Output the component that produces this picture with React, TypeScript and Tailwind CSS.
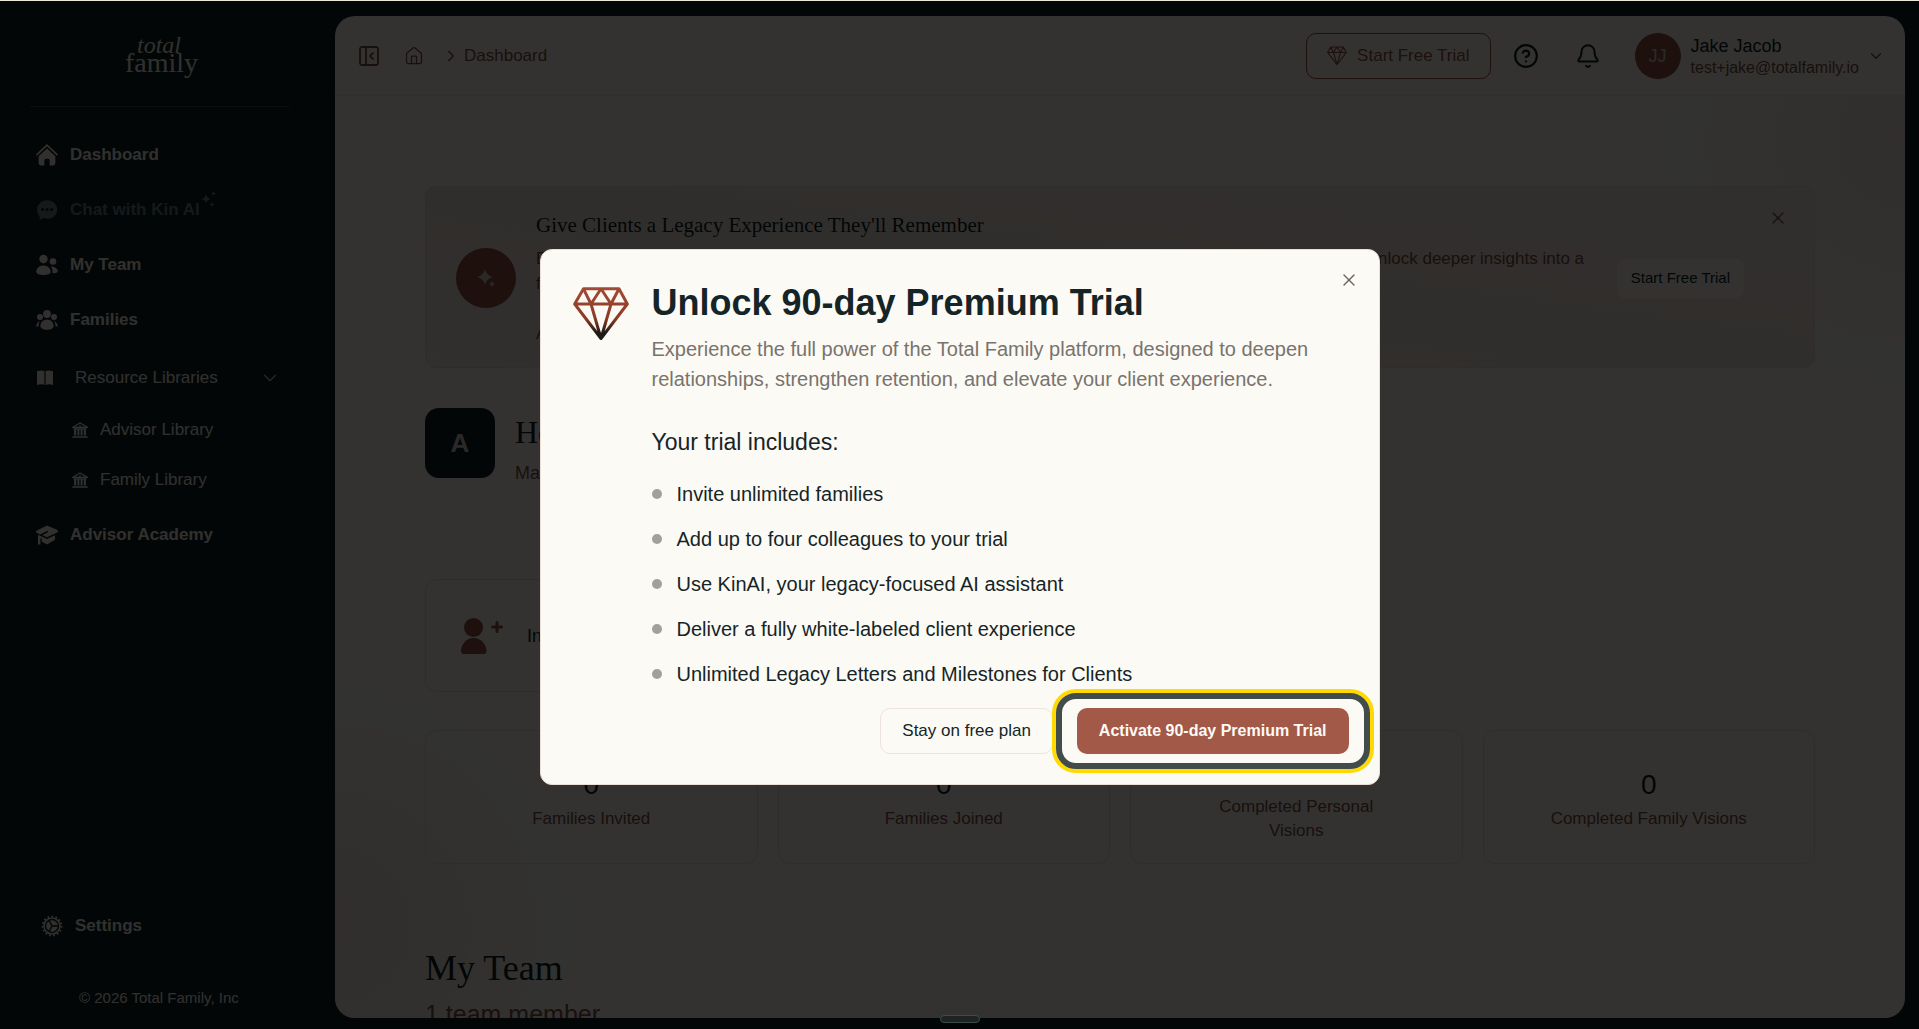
import React from 'react';
import { Bell, ChevronDown, ChevronRight, HelpCircle, House, PanelLeftClose, X } from 'lucide-react';

interface IconProps {
  className?: string;
}

const HomeIcon: React.FC<IconProps> = ({ className }) => (
  <svg viewBox="0 0 22 22" className={className} fill="currentColor">
    <path d="M1 10.6 11 1.2l10 9.4" fill="none" stroke="currentColor" strokeWidth="1.7" strokeLinecap="round" />
    <path d="M11 4.4 2.6 12.2V19a2.4 2.4 0 0 0 2.4 2.4h3.3v-5a1.6 1.6 0 0 1 1.6-1.6h2.2a1.6 1.6 0 0 1 1.6 1.6v5H17a2.4 2.4 0 0 0 2.4-2.4v-6.8z" />
  </svg>
);

const ChatIcon: React.FC<IconProps> = ({ className }) => (
  <svg viewBox="0 0 22 22" className={className} fill="currentColor">
    <path
      fillRule="evenodd"
      d="M11.2 1.2c5.6 0 10 4 10 9.2s-4.4 9.4-10 9.4c-1.4 0-2.6-.2-3.8-.7-1.2 1-2.8 1.6-4.6 1.6.8-1 1.1-2.2.9-3.3C2 15.7 1.2 13.2 1.2 10.4c0-5.2 4.4-9.2 10-9.2zM6.7 9a1.6 1.6 0 1 0 0 3.2 1.6 1.6 0 0 0 0-3.2zm4.5 0a1.6 1.6 0 1 0 0 3.2 1.6 1.6 0 0 0 0-3.2zm4.5 0a1.6 1.6 0 1 0 0 3.2 1.6 1.6 0 0 0 0-3.2z"
    />
  </svg>
);

const SparklesIcon: React.FC<IconProps> = ({ className }) => (
  <svg viewBox="0 0 16 16" className={className} fill="currentColor">
    <path d="M6 3q.6 4.4 5 5-4.4.6-5 5-.6-4.4-5-5 4.4-.6 5-5z" />
    <path d="M13.500 0q.2 2.200 2.500 2.500-2.300.3-2.500 2.500-.3-2.200-2.500-2.500 2.200-.3 2.500-2.500zM12 11q.3 2.200 2.500 2.500-2.200.3-2.500 2.500-.3-2.200-2.500-2.500 2.200-.3 2.500-2.500z" />
  </svg>
);

const TeamIcon: React.FC<IconProps> = ({ className }) => (
  <svg viewBox="0 0 22 22" className={className} fill="currentColor">
    <circle cx="7.5" cy="5" r="4.2" />
    <circle cx="17" cy="7.5" r="3.3" />
    <path d="M7.5 11.5c4.2 0 7.2 3 7.2 6.3 0 2.2-3.2 3.2-7.2 3.2s-7.2-1-7.2-3.200c0-3.300 3-6.300 7.200-6.300z" />
    <path d="M15 12.500c4 0 6.800 2.400 6.800 4.800 0 1.400-2.400 2-5.300 2 .3-2.600-.2-4.900-1.500-6.800z" />
  </svg>
);

const FamiliesIcon: React.FC<IconProps> = ({ className }) => (
  <svg viewBox="0 0 22 22" className={className} fill="currentColor">
    <circle cx="11" cy="5" r="3.9" />
    <circle cx="4" cy="8" r="3" />
    <circle cx="18" cy="8" r="3" />
    <path d="M11 10.500c4 0 6.600 3.200 6.600 6.600 0 2.400-2.600 3.700-6.600 3.700s-6.600-1.300-6.600-3.700c0-3.400 2.600-6.600 6.600-6.600z" />
    <path d="M3.900 12C1.700 13 .2 15 .2 17.500h2.300c0-2.200.4-4 1.400-5.500zM18.100 12c2.200 1 3.700 3 3.700 5.500h-2.300c0-2.200-.4-4-1.400-5.500z" />
  </svg>
);

const BookIcon: React.FC<IconProps> = ({ className }) => (
  <svg viewBox="0 0 16 16" className={className} fill="currentColor">
    <path d="M0 1.200C2.400.2 5.200.2 7.400 1v14c-2.200-1.100-5-1.100-7.400.1zM16 1.200C13.600.2 10.800.2 8.600 1v14c2.200-1.100 5-1.100 7.400.1z" />
  </svg>
);

const LibraryIcon: React.FC<IconProps> = ({ className }) => (
  <svg viewBox="0 0 16 16" className={className}>
    <path d="M.6 5.400 8 1l7.400 4.400z" fill="none" stroke="currentColor" strokeWidth="1.2" />
    <path d="M7 3.400h2v1.400H7zM1.500 6.200h13V7.500h-13zM2 7.500h2.200v6H2zM5.400 7.500h2v6h-2zM8.600 7.500h2v6h-2zM11.800 7.500H14v6h-2.200zM.3 14.200h15.400v1.500H.3z" fill="currentColor" />
  </svg>
);

const AcademyIcon: React.FC<IconProps> = ({ className }) => (
  <svg viewBox="0 0 22 22" className={className} fill="currentColor">
    <path d="M11 1.600 21.500 6 22 8l-11 5.200-4.600-2L12.200 8l-.7-1.200-7.400 3.700L.2 8.600 0 6.900z" />
    <path d="M2 10.800 11 15l8-3.700v4.500L11 20.400l-5.200-2.600v-3.200l-1.400-.6v6.400H2z" />
  </svg>
);

const SettingsIcon: React.FC<IconProps> = ({ className }) => (
  <svg viewBox="0 0 22 22" className={className} fill="none" stroke="currentColor">
    <circle cx="11" cy="11" r="8" strokeWidth="1.6" />
    <circle cx="11" cy="11" r="9.5" strokeWidth="1.9" strokeDasharray="1.7 2.3" />
    <circle cx="11" cy="11" r="5.8" fill="currentColor" stroke="none" />
    <path d="M11 11 8 5.400M11 11l-3 5.600M11 11h6.500" className="stroke-[#0b1f22]" strokeWidth="1.5" />
  </svg>
);

const GemIcon: React.FC<IconProps & { tipped?: boolean; weight: number }> = ({ className, tipped, weight }) => (
  <svg viewBox="0 0 56 54" className={className} fill="none" strokeWidth={weight} strokeLinejoin="round">
    <defs>
      <linearGradient id="gem-tip" x1="0" y1="0" x2="0" y2="54" gradientUnits="userSpaceOnUse">
        <stop offset="0" stopColor="#a14b36" />
        <stop offset="0.58" stopColor="#8d3b25" />
        <stop offset="0.85" stopColor="#1e1a17" />
      </linearGradient>
    </defs>
    <path
      d="M10.500 1.800h35.500L54.300 17 28 51.500 1.700 17zM1.700 17h52.600M10.500 1.800 18 17l10-15.200L38 17l8-15.200M18 17l10 34.500L38 17"
      stroke={tipped ? 'url(#gem-tip)' : 'currentColor'}
    />
  </svg>
);

const InviteIcon: React.FC<IconProps> = ({ className }) => (
  <svg viewBox="0 0 42 36" className={className} fill="currentColor">
    <circle cx="12.5" cy="9.5" r="9.5" />
    <path d="M0 33.500C0 26 5.500 20 12.500 20S25.500 26 25.500 33.500c0 1.500-1 2.500-2.500 2.500H2.500C1 36 0 35 0 33.500z" />
    <path d="M36 4.500v9M31.500 9h9" stroke="currentColor" strokeWidth="3" strokeLinecap="round" />
  </svg>
);

const NAV_ITEMS = [
  { label: 'Dashboard', icon: HomeIcon },
  { label: 'Chat with Kin AI', icon: ChatIcon, dimmed: true },
  { label: 'My Team', icon: TeamIcon },
  { label: 'Families', icon: FamiliesIcon },
];

const STATS = ['Families Invited', 'Families Joined', 'Completed Personal Visions', 'Completed Family Visions'];

const BENEFITS = [
  'Invite unlimited families',
  'Add up to four colleagues to your trial',
  'Use KinAI, your legacy-focused AI assistant',
  'Deliver a fully white-labeled client experience',
  'Unlimited Legacy Letters and Milestones for Clients',
];

const Sidebar = () => (
  <aside className="flex w-[335px] shrink-0 flex-col text-[17px] text-[#f5f0e6]">
    <div className="mr-[45px] ml-[31px] flex h-[106px] items-center justify-center border-b border-dotted border-[#5c6e6f]">
      <svg viewBox="0 0 76 54" className="h-[54px] w-[76px]" fill="currentColor" fontFamily="Liberation Serif, serif" role="img" aria-label="Total Family">
        <text x="14" y="26" fontSize="24" fontStyle="italic">total</text>
        <text x="2" y="45" fontSize="28">family</text>
      </svg>
    </div>

    <nav className="mt-5 font-bold">
      {NAV_ITEMS.map(({ label, icon: Icon, dimmed }) => (
        <a
          key={label}
          href="#"
          className={`flex h-[55px] items-center gap-3 pl-9 ${dimmed ? 'text-[#6b7f81]' : ''}`}
        >
          <Icon className="size-[22px]" />
          <span className="flex items-start">
            {label}
            {dimmed && <SparklesIcon className="-mt-1.5 size-4" />}
          </span>
        </a>
      ))}
      <div className="pb-0.5 font-normal">
        <button type="button" className="flex h-[58px] w-full items-center pt-1 pr-[54px] pl-[37px]">
          <BookIcon className="size-4" />
          <span className="mr-auto ml-[22px]">Resource Libraries</span>
          <ChevronDown className="size-[22px] text-[#d8c9bf]" strokeWidth={1.2} />
        </button>
        <a href="#" className="flex h-[50px] items-center gap-3 pl-[72px]">
          <LibraryIcon className="size-4" />
          Advisor Library
        </a>
        <a href="#" className="flex h-[50px] items-center gap-3 pl-[72px]">
          <LibraryIcon className="size-4" />
          Family Library
        </a>
      </div>
      <a href="#" className="flex h-[55px] items-center gap-3 pl-9">
        <AcademyIcon className="size-[22px]" />
        Advisor Academy
      </a>
    </nav>

    <div className="mt-auto pb-5">
      <a href="#" className="flex h-10 items-center gap-3 pl-[41px] font-bold">
        <SettingsIcon className="size-[22px]" />
        Settings
      </a>
      <p className="mt-[41px] pl-[79px] text-[15px] leading-[22px]">© 2026 Total Family, Inc</p>
    </div>
  </aside>
);

const Header = () => (
  <header className="flex h-20 shrink-0 items-center border-b border-[#efe9e1] pr-5 pl-[22px] text-[17px]">
    <button type="button" aria-label="Collapse sidebar" className="text-[#7d4f40]">
      <PanelLeftClose className="size-6" strokeWidth={1.8} />
    </button>
    <nav className="ml-[23px] flex items-center text-[#7d4f40]">
      <a href="#" aria-label="Home">
        <House className="size-5" strokeWidth={1.5} />
      </a>
      <ChevronRight className="ml-[18px] size-[18px]" strokeWidth={2} />
      <a href="#" className="ml-1">Dashboard</a>
    </nav>

    <button
      type="button"
      className="ml-auto flex h-[46px] items-center gap-2.5 rounded-[10px] border border-[#8f5040] px-5 text-[#8f5040]"
    >
      <GemIcon className="size-5" weight={3} />
      Start Free Trial
    </button>
    <button type="button" aria-label="Help" className="ml-[22px] text-[#0b1f22]">
      <HelpCircle className="size-[26px]" strokeWidth={2} />
    </button>
    <button type="button" aria-label="Notifications" className="ml-9 text-[#0b1f22]">
      <Bell className="size-[26px]" strokeWidth={1.8} />
    </button>
    <button type="button" className="ml-[34px] flex items-center text-left">
      <span className="flex size-[46px] items-center justify-center rounded-full bg-[#8f5040] text-lg text-[#d8cdc4]">JJ</span>
      <span className="ml-2.5">
        <span className="block text-lg leading-6 text-[#0b1f22]">Jake Jacob</span>
        <span className="block text-base leading-5 text-[#7d4f40]">test+jake@totalfamily.io</span>
      </span>
      <ChevronDown className="ml-2 size-[18px] text-[#7d4f40]" strokeWidth={1.8} />
    </button>
  </header>
);

const Banner = () => (
  <section className="flex items-center gap-5 rounded-[10px] border border-[#ecdfd6] bg-linear-to-tr from-[#f5ede5] via-[#f1e4db] to-[#f5ece5] px-[30px] pt-[23px] pb-[21px]">
    <div className="flex size-[60px] shrink-0 items-center justify-center rounded-full bg-[#8f5040] text-[#d8cdc4]">
      <svg viewBox="0 0 20 20" className="size-5" fill="currentColor">
        <path d="M9 1q1.400 6.600 8 8-6.600 1.400-8 8-1.400-6.600-8-8 6.600-1.400 8-8zM16 13q.6 2.400 3 3-2.400.6-3 3-.6-2.400-3-3 2.400-.6 3-3z" />
      </svg>
    </div>
    <div className="text-[17px] leading-[25px] text-[#7d4f40]">
      <h2 className="mb-1.5 font-['Liberation_Serif',serif] text-[21px] leading-[30px] text-[#0b1f22]">
        Give Clients a Legacy Experience They'll Remember
      </h2>
      <p>
        Explore advanced tools that help you guide meaningful conversations, strengthen every client relationship and unlock deeper insights into a
        <br />
        family's story.
      </p>
      <p className="mt-[25px]">Available for 90 days</p>
    </div>
    <button type="button" className="ml-auto h-[39px] shrink-0 rounded-lg bg-[#fcfaf5] px-3.5 text-[15px] text-[#0b1f22]">
      Start Free Trial
    </button>
    <button type="button" aria-label="Dismiss" className="-mt-0.5 -mr-1 ml-1 self-start text-[#7d4f40]">
      <X className="size-5" strokeWidth={1.6} />
    </button>
  </section>
);

const Dashboard = () => (
  <div className="px-[90px] pt-[90px] text-[17px]">
    <Banner />

    <section className="mt-10 flex items-start gap-5">
      <div className="flex size-[70px] items-center justify-center rounded-[14px] bg-[#0b1f22] text-[26px] font-bold text-[#d8cdc4]">
        A
      </div>
      <div className="pt-0.5">
        <h1 className="font-['Liberation_Serif',serif] text-[32px] leading-11 text-[#0b1f22]">Hello, Jake</h1>
        <p className="mt-1 text-lg leading-[30px] text-[#7d4f40]">Manage your families and team</p>
      </div>
    </section>

    <section className="mt-[91px] grid grid-cols-2">
      <a href="#" className="flex h-[113px] items-center gap-6 rounded-xl border border-[#e8dfd7] px-[35px] text-lg text-[#0b1f22]">
        <InviteIcon className="h-9 w-[42px] text-[#8f5040]" />
        Invite a Family
      </a>
    </section>

    <section className="mt-[38px] grid grid-cols-4 gap-5 text-center">
      {STATS.map((label) => (
        <div key={label} className="flex flex-col items-center justify-center rounded-xl border border-[#e8dfd7] pt-6 pb-5">
          <p className="text-[28px] leading-9 text-[#0b1f22]">0</p>
          <p className="mt-1 max-w-[204px] leading-6 text-[#7d4f40]">{label}</p>
        </div>
      ))}
    </section>

    <section className="mt-20">
      <h2 className="font-['Liberation_Serif',serif] text-[36px] leading-12 text-[#0b1f22]">My Team</h2>
      <p className="text-[25px] leading-11 text-[#7d4f40]">1 team member</p>
    </section>
  </div>
);

const TrialDialog = () => (
  <div
    role="dialog"
    aria-modal="true"
    aria-labelledby="trial-title"
    className="relative flex w-full max-w-[840px] gap-[22px] rounded-xl border border-[#eaded6] bg-[#fcfaf5] pt-[33px] pr-[30px] pb-[30px] pl-[31px] text-[#152527]"
  >
    <GemIcon className="mt-1 h-[54px] w-[58px] shrink-0" weight={3} tipped />
    <div className="flex-1">
      <h2 id="trial-title" className="text-[36px] leading-10 font-bold">Unlock 90-day Premium Trial</h2>
      <p className="mt-[11px] mr-8 text-xl leading-[30px] text-[#78736d]">
        Experience the full power of the Total Family platform, designed to deepen relationships, strengthen retention, and
        elevate your client experience.
      </p>
      <h3 className="mt-[33px] text-[23px] leading-[30px]">Your trial includes:</h3>
      <ul className="mt-[22px] space-y-[15px] text-xl leading-[30px]">
        {BENEFITS.map((benefit) => (
          <li key={benefit} className="flex items-center gap-[15px]">
            <span className="size-2.5 rounded-full bg-[#a0a09d]" />
            {benefit}
          </li>
        ))}
      </ul>
      <div className="mt-[19px] flex justify-end gap-6">
        <button type="button" className="h-[46px] rounded-[10px] border border-[#efe3dd] px-[21px] text-[17px]">
          Stay on free plan
        </button>
        <div className="relative">
          <button type="button" className="h-[46px] rounded-[10px] bg-[#a35947] px-[22px] text-base font-bold text-[#fcfaf5]">
            Activate 90-day Premium Trial
          </button>
          {/* Guided tour highlight */}
          <span className="pointer-events-none absolute -inset-x-[21px] -inset-y-[15px] rounded-[20px] border-6 border-[#414c4b] ring-4 ring-[#ffd900]" />
        </div>
      </div>
    </div>
    <button type="button" aria-label="Close" className="absolute top-5 right-5 text-[#6b625d]">
      <X className="size-5" strokeWidth={1.6} />
    </button>
  </div>
);

export default function App() {
  return (
    <div className="relative flex h-screen flex-col overflow-hidden bg-[#0b1f22] font-['Liberation_Sans',Arial,sans-serif]">
      <div className="h-px shrink-0 bg-[#ece8d6]" />
      <div className="flex min-h-0 flex-1">
        <Sidebar />
        <main className="mt-[15px] mr-3.5 mb-[11px] flex min-w-0 flex-1 flex-col overflow-hidden rounded-[20px] bg-[#fcfaf5]">
          <Header />
          <div className="min-h-0 flex-1 overflow-hidden bg-[radial-gradient(circle_at_100%_5%,#f4e7de,transparent_240px),radial-gradient(circle_at_0%_90%,#f3e6de,transparent_240px)]">
            <Dashboard />
          </div>
        </main>
      </div>

      <div className="absolute inset-x-0 top-px bottom-0 flex items-center justify-center bg-black/80 pt-1">
        <TrialDialog />
      </div>
      <div className="absolute bottom-1.5 left-1/2 h-2 w-10 -translate-x-1/2 rounded-full border border-[#3c4b4b] bg-[#1d2424]" />
    </div>
  );
}
